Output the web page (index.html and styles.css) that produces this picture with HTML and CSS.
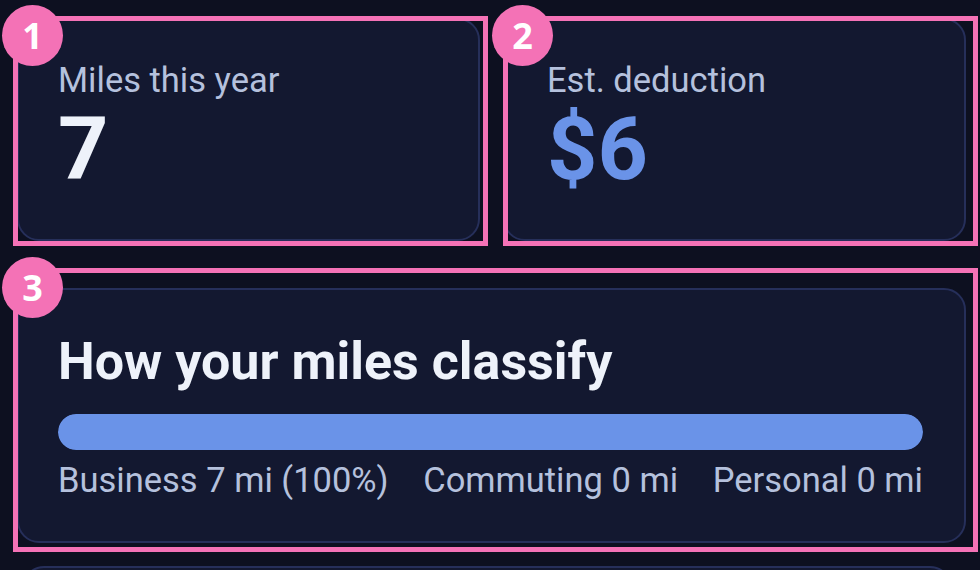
FILE: index.html
```html
<!DOCTYPE html>
<html lang="en">
<head>
<meta charset="utf-8">
<title>Mileage summary</title>
<link rel="stylesheet" href="styles.css">
</head>
<body>
<main class="page">
  <section class="stats">
    <div class="card stat">
      <div class="stat-label">Miles this year</div>
      <div class="stat-value">7</div>
    </div>
    <div class="card stat">
      <div class="stat-label">Est. deduction</div>
      <div class="stat-value accent">$6</div>
    </div>
  </section>
  <section class="card classify">
    <h2 class="classify-title">How your miles classify</h2>
    <div class="bar"><div class="bar-fill" style="width:100%"></div></div>
    <div class="legend">
      <span>Business 7 mi (100%)</span>
      <span>Commuting 0 mi</span>
      <span>Personal 0 mi</span>
    </div>
  </section>
  <section class="card next"></section>
</main>

<div class="mark mark-1"><span class="badge">1</span></div>
<div class="mark mark-2"><span class="badge">2</span></div>
<div class="mark mark-3"><span class="badge">3</span></div>
</body>
</html>
```

FILE: styles.css
```css
* { box-sizing: border-box; }

html, body {
  margin: 0;
  height: 100%;
  overflow: hidden;
}

body {
  background: #0d1020;
  font-family: Roboto, "Liberation Sans", sans-serif;
  color: #eef2fa;
  position: relative;
}

.page {
  padding: 18px 14px 0 17px;
}

.card {
  background: #131830;
  border: 2px solid #262f5a;
  border-radius: 22px;
}

.stats {
  display: grid;
  grid-template-columns: 1fr 1fr;
  gap: 23px;
}

.stat {
  height: 223px;
  padding: 41px 40px 0 39px;
}

.stat + .stat {
  padding-left: 42px;
}

.stat-label {
  font-size: 34.5px;
  line-height: 38px;
  color: #b5c1dd;
}

.stat-value {
  margin-top: 6px;
  font-size: 88px;
  line-height: 88px;
  font-weight: 700;
  color: #eef2fa;
}

.stat-value.accent {
  color: #6a93e8;
}

.classify {
  margin-top: 47px;
  padding: 41px 41px 40px 39px;
  height: 255px;
}

.classify-title {
  margin: 0;
  font-size: 52px;
  line-height: 62px;
  font-weight: 700;
  color: #eef2fa;
}

.bar {
  margin-top: 21px;
  height: 36px;
  border-radius: 18px;
  background: #1f2748;
  overflow: hidden;
}

.bar-fill {
  height: 100%;
  background: #6a93e8;
  border-radius: 18px;
}

.legend {
  margin-top: 11px;
  display: flex;
  justify-content: space-between;
  font-size: 34.5px;
  line-height: 38px;
  color: #b5c1dd;
}

.next {
  margin-top: 23px;
  margin-left: 5px;
  margin-right: 14px;
  height: 60px;
}

/* annotation overlays */
.mark {
  position: absolute;
  border: 5px solid #f472b6;
}

.mark-1 { left: 13px; top: 16px; width: 475px; height: 230px; }
.mark-2 { left: 503px; top: 16px; width: 475px; height: 230px; }
.mark-3 { left: 13px; top: 268px; width: 965px; height: 284px; }

.badge {
  position: absolute;
  left: -16px;
  top: -16px;
  width: 61px;
  height: 61px;
  border-radius: 50%;
  background: #f472b6;
  color: #ffffff;
  font-family: "Open Sans", "Noto Sans", sans-serif;
  font-weight: 700;
  font-size: 36px;
  line-height: 61px;
  text-align: center;
}
```
